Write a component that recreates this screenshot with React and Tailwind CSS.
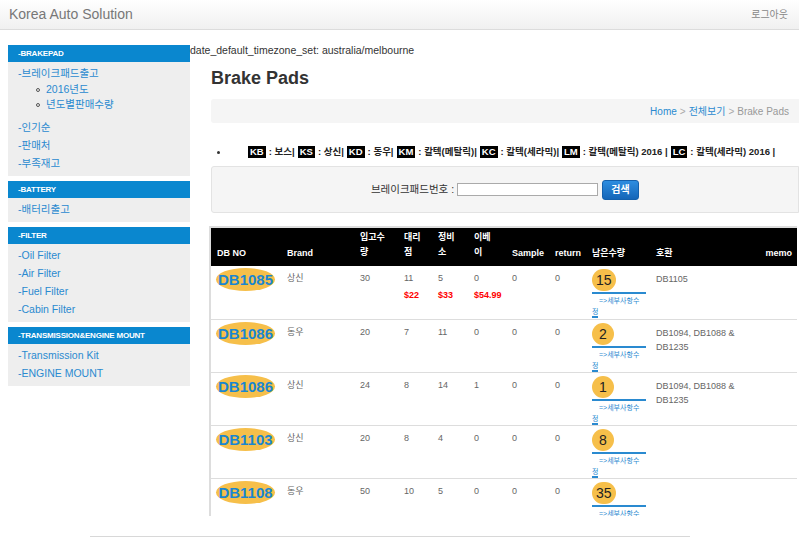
import React from "react";

const font = { fontFamily: '"Liberation Sans", Arial, "Noto Sans CJK KR", sans-serif' };

const menu = [
  {
    title: "-BRAKEPAD",
    items: [
      { label: "-브레이크패드출고", sub: ["2016년도", "년도별판매수량"] },
      { label: "-인기순" },
      { label: "-판매처" },
      { label: "-부족재고" },
    ],
  },
  { title: "-BATTERY", items: [{ label: "-배터리출고" }] },
  {
    title: "-FILTER",
    items: [{ label: "-Oil Filter" }, { label: "-Air Filter" }, { label: "-Fuel Filter" }, { label: "-Cabin Filter" }],
  },
  {
    title: "-TRANSMISSION&ENGINE MOUNT",
    items: [{ label: "-Transmission Kit" }, { label: "-ENGINE MOUNT" }],
  },
];

const legend = [
  ["KB", "보스|"],
  ["KS", "상신|"],
  ["KD", "동우|"],
  ["KM", "칼텍(메탈릭)|"],
  ["KC", "칼텍(세라믹)|"],
  ["LM", "칼텍(메탈릭) 2016 |"],
  ["LC", "칼텍(세라믹) 2016 |"],
];

const rows = [
  { no: "DB1085", brand: "상신", inq: 30, dl: 11, js: 5, eb: 0, prices: ["$22", "$33", "$54.99"], left: 15, compat: ["DB1105"] },
  { no: "DB1086", brand: "동우", inq: 20, dl: 7, js: 11, eb: 0, left: 2, compat: ["DB1094, DB1088 &", "DB1235"] },
  { no: "DB1086", brand: "상신", inq: 24, dl: 8, js: 14, eb: 1, left: 1, compat: ["DB1094, DB1088 &", "DB1235"] },
  { no: "DB1103", brand: "상신", inq: 20, dl: 8, js: 4, eb: 0, left: 8, compat: [] },
  { no: "DB1108", brand: "동우", inq: 50, dl: 10, js: 5, eb: 0, left: 35, compat: [] },
];

function Sidebar() {
  return (
    <div className="w-[182px] ml-[8px] mt-[15px] shrink-0">
      {menu.map((sec) => (
        <div key={sec.title} className="mb-[5px]">
          <div className="h-[17px] bg-[#0a87cf] text-white text-[8px] font-bold pl-[10px] leading-[17px] tracking-tight">
            {sec.title}
          </div>
          <div className="bg-[#eeeeee] pt-[2px] pb-[4px] pl-[10px] text-[10.5px] text-[#2a8ad0]">
            {sec.items.map((it) => (
              <div key={it.label}>
                <div className="h-[18px] leading-[18px]">{it.label}</div>
                {it.sub && (
                  <ul className="pl-[18px] mb-[6px]">
                    {it.sub.map((s) => (
                      <li key={s} className="h-[15px] leading-[13px] flex items-center gap-[6px]">
                        <span className="w-[4px] h-[4px] rounded-full border border-[#555]" />
                        {s}
                      </li>
                    ))}
                  </ul>
                )}
              </div>
            ))}
          </div>
        </div>
      ))}
    </div>
  );
}

function Badge({ n }) {
  return (
    <div>
      <div className="w-fit bg-[#f6bf4a] rounded-full px-[4px] h-[22px] leading-[22px] text-[14px] text-[#222] min-w-[22px] text-center">
        {n}
      </div>
      <div className="w-[54px] border-t-2 border-[#2a8ad0] text-[7px] leading-[11px] text-[#2a8ad0] mt-[1px] pt-[1px]">
        <div className="pl-[7px] h-[12px]">{"=>세부사항수"}</div>
        <div className="w-fit border-b-2 border-[#2a8ad0] leading-[9px]">정</div>
      </div>
    </div>
  );
}

function Row({ r }) {
  const p = r.prices || [];
  return (
    <tr className="h-[53px] border-b border-[#dddddd] align-top text-[9px] text-[#666]">
      <td className="pl-[5px] pt-[2px]">
        <div className="w-[59px] h-[23px] rounded-[50%] bg-[#f6bf4a] text-center leading-[23px] text-[15px] font-bold text-[#1a86d0]">
          {r.no}
        </div>
      </td>
      <td className="pl-[6px] pt-[6px]">{r.brand}</td>
      <td className="pl-[6px] pt-[6px]">{r.inq}</td>
      <td className="pl-[6px] pt-[6px]">
        {r.dl}
        <div className="text-[#ff0000] font-bold mt-[3px]">{p[0]}</div>
      </td>
      <td className="pl-[6px] pt-[6px]">
        {r.js}
        <div className="text-[#ff0000] font-bold mt-[3px]">{p[1]}</div>
      </td>
      <td className="pl-[6px] pt-[6px]">
        {r.eb}
        <div className="text-[#ff0000] font-bold mt-[3px]">{p[2]}</div>
      </td>
      <td className="pl-[6px] pt-[6px]">0</td>
      <td className="pl-[6px] pt-[6px]">0</td>
      <td className="pl-[6px] pt-[3px]">
        <Badge n={r.left} />
      </td>
      <td className="pl-[6px] pt-[6px] leading-[14px]">
        {r.compat.map((c) => (
          <div key={c}>{c}</div>
        ))}
      </td>
      <td />
    </tr>
  );
}

export default function App() {
  return (
    <div style={font} className="w-[799px] h-[538px] overflow-hidden bg-white text-[#333] relative">
      <div className="h-[30px] bg-gradient-to-b from-white to-[#f0f0f0] border-b border-[#dcdcdc] flex items-center justify-between px-[9px]">
        <span className="text-[14px] text-[#777]">Korea Auto Solution</span>
        <span className="text-[10px] text-[#888] pr-[2px]">로그아웃</span>
      </div>

      <div className="flex">
        <Sidebar />

        <div className="flex-1 min-w-0">
          <div className="text-[10.5px] text-[#333] mt-[14px] leading-[13px]">date_default_timezone_set: australia/melbourne</div>

          <div className="pl-[21px]">
            <h1 className="text-[18px] font-bold text-[#333] mt-[9px] leading-[24px]">Brake Pads</h1>

            <div className="mt-[9px] h-[24px] bg-[#f5f5f5] rounded-l-[3px] flex items-center justify-end pr-[10px] text-[10px]">
              <span className="text-[#2a8ad0]">Home</span>
              <span className="text-[#aaa] px-[3px]">&gt;</span>
              <span className="text-[#2a8ad0]">전체보기</span>
              <span className="text-[#aaa] px-[3px]">&gt;</span>
              <span className="text-[#999]">Brake Pads</span>
            </div>

            <div className="mt-[22px] flex items-center h-[14px] text-[9.5px] font-bold text-[#222] whitespace-nowrap">
              <span className="w-[3px] h-[3px] rounded-full bg-[#333] ml-[6px] mr-[28px] shrink-0" />
              {legend.map(([k, v]) => (
                <span key={k} className="flex items-center mr-[3px]">
                  <span className="bg-black text-white px-[2px] mr-[3px] leading-[12px]">{k}</span>
                  : {v}
                </span>
              ))}
            </div>

            <div className="mt-[7px] h-[47px] bg-[#f5f5f5] border border-[#e3e3e3] rounded-l-[3px] flex items-center justify-center gap-[3px] text-[10.5px] text-[#333]">
              <span>브레이크패드번호 :</span>
              <span className="w-[141px] h-[13px] bg-white border border-[#aaa]" />
              <span className="ml-[1px] w-[37px] h-[20px] rounded-[3px] bg-gradient-to-b from-[#2d8de0] to-[#1566b8] border border-[#1460ac] text-white text-[10px] font-bold flex items-center justify-center">
                검색
              </span>
            </div>

            <div className="mt-[13px] h-[290px] overflow-hidden border-l-2 border-t-2 border-[#dddddd] mr-[2px] -ml-[2px]">
              <table className="w-full table-fixed border-collapse">
                <colgroup>
                  <col className="w-[70px]" />
                  <col className="w-[73px]" />
                  <col className="w-[44px]" />
                  <col className="w-[34px]" />
                  <col className="w-[36px]" />
                  <col className="w-[38px]" />
                  <col className="w-[43px]" />
                  <col className="w-[37px]" />
                  <col className="w-[64px]" />
                  <col className="w-[90px]" />
                  <col />
                </colgroup>
                <thead>
                  <tr className="h-[38px] bg-black text-white text-[9px] font-bold align-bottom text-left">
                    <th className="pl-[6px] pb-[6px]">DB NO</th>
                    <th className="pl-[6px] pb-[6px]">Brand</th>
                    <th className="pl-[6px] pb-[6px] leading-[15px]">입고수<br />량</th>
                    <th className="pl-[6px] pb-[6px] leading-[15px]">대리<br />점</th>
                    <th className="pl-[6px] pb-[6px] leading-[15px]">정비<br />소</th>
                    <th className="pl-[6px] pb-[6px] leading-[15px]">이베<br />이</th>
                    <th className="pl-[6px] pb-[6px]">Sample</th>
                    <th className="pl-[6px] pb-[6px]">return</th>
                    <th className="pl-[6px] pb-[6px]">남은수량</th>
                    <th className="pl-[6px] pb-[6px]">호환</th>
                    <th className="pr-[5px] pb-[6px] text-right">memo</th>
                  </tr>
                </thead>
                <tbody>
                  {rows.map((r, i) => (
                    <Row key={i} r={r} />
                  ))}
                </tbody>
              </table>
            </div>
          </div>
        </div>
      </div>

      <div className="absolute left-[90px] top-[536px] w-[600px] h-[1px] bg-[#d8d8d8]" />
    </div>
  );
}
